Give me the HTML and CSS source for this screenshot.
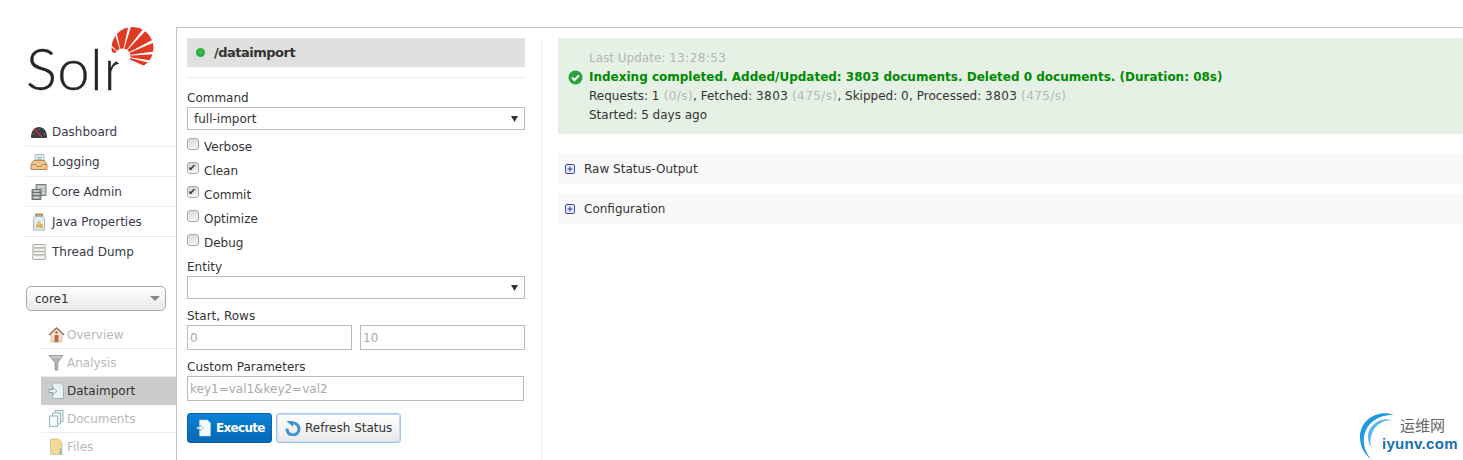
FILE: index.html
```html
<!DOCTYPE html>
<html lang="en">
<head>
<meta charset="utf-8">
<title>Solr Admin</title>
<link rel="stylesheet" href="styles.css">
</head>
<body>
<div class="page">
  <aside class="sidebar">
    <div class="logo">
      <svg width="150" height="90" viewBox="0 27 150 90">
        <defs><clipPath id="sun"><circle cx="132.500" cy="48" r="21"/></clipPath></defs>
        <text x="0" y="90" class="logo-text">Solr</text>
        <g transform="translate(-26 0)" clip-path="url(#sun)" fill="#e03a22">
          <polygon points="122,56 84.9,41 91.4,30.3"/>
          <polygon points="122,56 93.7,27.7 109.6,18"/>
          <polygon points="122,56 113,17 130.3,16.9"/>
          <polygon points="122,56 133.7,17.8 146.6,24.5"/>
          <polygon points="122,56 149.3,26.8 157.3,37.2"/>
          <polygon points="122,56 158.8,40.4 161.6,50.4"/>
          <polygon points="122,56 162,53.9 161.5,62.3"/>
          <polygon points="122,56 160.8,65.7 158.6,72.3"/>
          <circle cx="122.500" cy="56.500" r="8" fill="#fff"/>
        </g>
      </svg>
    </div>
    <ul class="nav">
      <li class="nav-item">
        <svg class="nav-icon" viewBox="0 0 18 18"><path d="M1 14C1 8 4.500 4 9 4S17 8 17 14c0 1-1 1-2 1H3c-1 0-2 0-2-1z" fill="#3c3d44"/><path d="M4 6l8 8" stroke="#d8342c" stroke-width="1.300"/><path d="M3 11h1M9 6v1M14 11h1" stroke="#9a9aa0"/></svg>
        <span>Dashboard</span>
      </li>
      <li class="nav-item">
        <svg class="nav-icon" viewBox="0 0 18 18"><path d="M5 1.500h9v9H5z" fill="#dfeaf0" stroke="#a9bcc6"/><path d="M7 4.500h5M7 6.500h5" stroke="#9fb3bd"/><path d="M3.500 7.500L1 11.500v5h16v-5l-2.500-4z" fill="#f0c690" stroke="#c08a50"/><path d="M1.500 11.500h4.500l1 2h4l1-2h4.500" fill="none" stroke="#c08a50"/></svg>
        <span>Logging</span>
      </li>
      <li class="nav-item">
        <svg class="nav-icon" viewBox="0 0 18 18"><path d="M6 1.500h10v11H6z" fill="#b9bdb8" stroke="#7d827e"/><path d="M2 6.500h9v3H2zM2 9.500h9v3H2zM2 12.500h9v4H2z" fill="#9ca3a0" stroke="#6b716e"/><path d="M7 4h8M12 7h3M12 10h3M4 8h5M4 11h5M4 14.500h5" stroke="#e4e8e4"/></svg>
        <span>Core Admin</span>
      </li>
      <li class="nav-item">
        <svg class="nav-icon" viewBox="0 0 18 18"><path d="M5.500 1h7v2.500h-7z" fill="#c9a268" stroke="#a98648"/><path d="M5 3.500h8l1.500 2.500v11h-11V6z" fill="#e2edf3" stroke="#a8b8c4"/><circle cx="7.500" cy="13" r="2" fill="#e1b75e"/><circle cx="11" cy="13" r="2" fill="#d9a94a"/><circle cx="9" cy="10" r="2" fill="#e8c470"/></svg>
        <span>Java Properties</span>
      </li>
      <li class="nav-item">
        <svg class="nav-icon" viewBox="0 0 18 18"><g fill="#f0f0ec" stroke="#a8aaa6"><rect x="2.500" y="1.500" width="13" height="3.500" rx="1.700"/><rect x="2.500" y="5" width="13" height="3.500" rx="1.700"/><rect x="2.500" y="8.500" width="13" height="3.500" rx="1.700"/><rect x="2.500" y="12" width="13" height="4.500" rx="1.700"/></g></svg>
        <span>Thread Dump</span>
      </li>
    </ul>
    <div class="core-select">
      <span>core1</span>
      <svg class="core-caret" width="10" height="5" viewBox="0 0 10 5"><path d="M0 0h10L5 5z" fill="#888"/></svg>
    </div>
    <ul class="subnav">
      <li class="sub-item">
        <svg class="sub-icon" viewBox="0 0 17 17"><path d="M.5 8.500L8.500 1l8 7.500-1 1-7-6.300-7 6.300z" fill="#8b5a3a"/><path d="M3 8l5.500-5L14 8v8H3z" fill="#f3e3cd" stroke="#b99873" stroke-width=".6"/><rect x="6.500" y="9" width="4" height="7" fill="#b9582a"/><circle cx="8.500" cy="6.500" r="1.200" fill="#b9582a"/></svg>
        <span>Overview</span>
      </li>
      <li class="sub-item">
        <svg class="sub-icon" viewBox="0 0 17 17"><path d="M1 1.500h14L9.800 8.500v7.500H7V8.500z" fill="#a9aba8" stroke="#7e807d" stroke-width=".7"/><path d="M3 3h10" stroke="#e0e0de"/></svg>
        <span>Analysis</span>
      </li>
      <li class="sub-item sub-active">
        <svg class="sub-icon" viewBox="0 0 17 17"><path d="M4.500 1h8l3 3v12.500h-11z" fill="#edf6f7" stroke="#8ba9ae" stroke-width=".8"/><path d="M1 7.500h4V5.500l3.800 3.500L5 12.500v-2H1z" fill="#f2f8f8" stroke="#6f9399" stroke-width=".8"/></svg>
        <span>Dataimport</span>
      </li>
      <li class="sub-item">
        <svg class="sub-icon" viewBox="0 0 17 17"><path d="M7 .5h8v11H7z" fill="#e5f0f0" stroke="#7f9da0" stroke-width=".8"/><path d="M4.500 3h8v11h-8z" fill="#eef6f6" stroke="#7f9da0" stroke-width=".8"/><path d="M1.500 6h8v10.500h-8z" fill="#f6fbfb" stroke="#7f9da0" stroke-width=".8"/></svg>
        <span>Documents</span>
      </li>
      <li class="sub-item">
        <svg class="sub-icon" viewBox="0 0 17 17"><path d="M2.500 1h8l3.500 3v12.500H2.500z" fill="#f2d48e" stroke="#d3ae62" stroke-width=".7"/><path d="M12.500 10.500v6" stroke="#5fa6c9" stroke-width="1.500"/></svg>
        <span>Files</span>
      </li>
    </ul>
  </aside>

  <main class="content">
    <section class="form-col">
      <h2 class="form-title"><span class="dot"></span>/dataimport</h2>
      <div class="form-rule"></div>
      <label class="field-label">Command</label>
      <div class="fake-select">
        <span>full-import</span>
        <svg width="7" height="6" viewBox="0 0 7 6"><path d="M0 0h7L3.500 6z" fill="#333"/></svg>
      </div>
      <div class="checks">
        <label class="check"><input type="checkbox"><span>Verbose</span></label>
        <label class="check"><input type="checkbox" checked><span>Clean</span></label>
        <label class="check"><input type="checkbox" checked><span>Commit</span></label>
        <label class="check"><input type="checkbox"><span>Optimize</span></label>
        <label class="check"><input type="checkbox"><span>Debug</span></label>
      </div>
      <label class="field-label label-tight">Entity</label>
      <div class="fake-select">
        <span></span>
        <svg width="7" height="6" viewBox="0 0 7 6"><path d="M0 0h7L3.500 6z" fill="#333"/></svg>
      </div>
      <label class="field-label label-gap">Start, Rows</label>
      <div class="pair">
        <input class="text-input" type="text" placeholder="0">
        <input class="text-input" type="text" placeholder="10">
      </div>
      <label class="field-label label-gap">Custom Parameters</label>
      <input class="text-input input-wide" type="text" placeholder="key1=val1&amp;key2=val2">
      <div class="buttons">
        <button class="btn btn-primary" type="button">
          <svg width="15" height="18" viewBox="1 0 15 18"><path d="M4.500 1h8l3 3v13h-11z" fill="#f4fafb" stroke="#b5d0de" stroke-width=".6"/><path d="M2 8h3V6l3.500 3L5 12v-2H2z" fill="#fff" stroke="#7ba4b8" stroke-width=".7"/></svg>
          <span>Execute</span>
        </button>
        <button class="btn btn-secondary" type="button">
          <svg width="16" height="16" viewBox="0 0 16 16"><path d="M8 3a6 6 0 1 1-6 5.500" fill="none" stroke="#3b93d4" stroke-width="3"/><path d="M1.500 1l6.500 0v6z" fill="#3b93d4"/></svg>
          <span>Refresh Status</span>
        </button>
      </div>
    </section>
    <section class="status-col">
      <div class="status">
        <div class="status-line status-muted">Last Update: <span class="num">13:28:53</span></div>
        <svg class="status-icon" width="15" height="15" viewBox="0 0 15 15"><circle cx="7.500" cy="7.500" r="7" fill="#2da13c"/><path d="M4 7.500l2.500 2.500 4.500-4.500" fill="none" stroke="#fff" stroke-width="2"/></svg>
        <div class="status-line status-head">Indexing completed. Added/Updated: 3803 documents. Deleted 0 documents. (Duration: 08s)</div>
        <div class="status-line">Requests: <span class="num">1</span> <span class="rate num">(0/s)</span>, Fetched: <span class="num">3803</span> <span class="rate num">(475/s)</span>, Skipped: <span class="num">0</span>, Processed: <span class="num">3803</span> <span class="rate num">(475/s)</span></div>
        <div class="status-line">Started: 5 days ago</div>
      </div>
      <div class="block">
        <svg width="10" height="10" viewBox="0 0 10 10"><rect x=".5" y=".5" width="9" height="9" rx="1.500" fill="#e8ecf8" stroke="#3a48a8"/><path d="M2.500 5h5M5 2.500v5" stroke="#2a3898"/></svg>
        <span>Raw Status-Output</span>
      </div>
      <div class="block">
        <svg width="10" height="10" viewBox="0 0 10 10"><rect x=".5" y=".5" width="9" height="9" rx="1.500" fill="#e8ecf8" stroke="#3a48a8"/><path d="M2.500 5h5M5 2.500v5" stroke="#2a3898"/></svg>
        <span>Configuration</span>
      </div>
    </section>
  </main>
</div>
<div class="watermark">
  <svg class="wm-arc" width="50" height="50" viewBox="0 0 50 50"><path d="M35 3C20-3 1 7 1 25c0 11 6 19 11 22C6 40 4 32 5 25 7 11 20 2 35 3z" fill="#1f9ae0"/><path d="M33 8C22 5 9 13 9 25c0 5 2 9 4 12-2-4-2-8-1-12C14 14 23 8 33 8z" fill="#5cb8e8"/></svg>
  <div class="wm-text">
    <span class="wm-cn">运维网</span>
    <span class="wm-en">iyunv.com</span>
  </div>
</div>
</body>
</html>
```

FILE: styles.css
```css
* { box-sizing: border-box; }
html, body { margin: 0; padding: 0; height: 460px; overflow: hidden; background: #fff; }
body { font-family: "DejaVu Sans", sans-serif; font-size: 12px; color: #333; }
ul { list-style: none; margin: 0; padding: 0; }

.page { display: flex; height: 460px; padding-top: 27px; }

.sidebar { width: 176px; flex: none; padding-left: 26px; }
.logo { height: 90px; }
.logo svg { display: block; }
.logo-text { font-family: "Lato", sans-serif; font-weight: 300; font-size: 58px; letter-spacing: .5px; fill: #25252b; stroke: #25252b; stroke-width: .4px; }

.nav-item { display: flex; align-items: center; height: 30px; padding-left: 4px; gap: 4px; border-bottom: 1px solid #eee; color: #3a3a4a; }
.nav-item:last-child { border-bottom: 0; }
.nav-icon { width: 18px; height: 18px; flex: none; }

.core-select { display: flex; align-items: center; justify-content: space-between; width: 140px; height: 25px; margin-top: 19px; padding: 0 5px 0 8px; border: 1px solid #aaa; border-radius: 5px; background: linear-gradient(#fff, #e8e8e8); }

.subnav { margin: 10px 0 0 15px; }
.sub-item { display: flex; align-items: center; height: 28px; padding-left: 7px; gap: 2px; border-bottom: 1px solid #eee; color: #b8b8b8; }
.sub-icon { width: 17px; height: 17px; flex: none; opacity: .9; }
.sub-active { background: #ccc; color: #333; border-bottom-color: #ccc; }

.content { flex: 1; display: flex; padding: 10px 0 0 10px; border-top: 1px solid #c4c4c4; border-left: 1px solid #c4c4c4; }

.form-col { width: 355px; flex: none; padding-right: 16px; border-right: 1px solid #eee; display: flex; flex-direction: column; align-items: stretch; }
.form-col > * { flex: none; }
.form-title { display: flex; align-items: center; height: 29px; margin: 0; padding-left: 9px; background: #e0e0e0; font-size: 13px; font-weight: bold; letter-spacing: -.5px; color: #333; }
.dot { width: 9px; height: 9px; margin-right: 9px; border-radius: 50%; background: radial-gradient(circle at 50% 40%, #3cc04c, #1f9a30); }
.form-rule { height: 1px; margin-top: 10px; background: #eee; }

.field-label { display: block; height: 19px; line-height: 21px; margin-top: 10px; }
.label-tight { margin-top: 3px; }
.label-gap { margin-top: 7px; }

.fake-select { display: flex; align-items: center; justify-content: space-between; height: 23px; padding: 0 6px; border: 1px solid #bbb; background: #fff; }

.checks { margin-top: 4px; }
.check { display: flex; align-items: center; gap: 5px; height: 24px; }
.check span { padding-top: 2px; }
.check input { appearance: none; position: relative; width: 12px; height: 12px; margin: 0 0 4px; border: 1px solid #aaa; border-radius: 3px; background: linear-gradient(#d8d8d8, #f5f5f5); }
.check input:checked::after { content: "✔"; position: absolute; left: 0; top: -1px; font-size: 10px; line-height: 12px; color: #333; }

.pair { display: flex; justify-content: space-between; }
.pair .text-input { width: 165px; }
.text-input { display: block; height: 25px; padding: 0 2px; border: 1px solid #bbb; outline: 0; font: inherit; color: #333; }
.text-input::placeholder { color: #aaa; opacity: 1; }
.input-wide { width: 337px; }

.buttons { display: flex; gap: 4px; margin-top: 12px; }
.btn { display: flex; align-items: center; height: 30px; font: inherit; border-radius: 3px; }
.btn-primary { width: 85px; padding: 0 0 0 8px; gap: 5px; border: 1px solid #0a63ad; background: linear-gradient(#0a82d8, #0567b4); color: #fff; font-weight: bold; letter-spacing: -.7px; }
.btn-secondary { width: 125px; padding: 0 0 0 8px; gap: 4px; border: 1px solid #a4c6f2; box-shadow: 0 0 0 1px #c5d9f4 inset; background: linear-gradient(#fff, #e8e8e8); color: #333; }

.status-col { flex: 1; padding-left: 16px; }
.status { display: grid; grid-template-columns: 21px 1fr; align-items: center; padding: 11px 0 9px 10px; background: #e6f1e6; }
.status-line { grid-column: 2; line-height: 19px; white-space: nowrap; }
.status-icon { grid-column: 1; grid-row: 2; }
.status-head { grid-row: 2; font-weight: bold; color: #008a00; }
.status-muted { color: #b5b5b5; }
.rate { color: #b8b8b8; }
.num { letter-spacing: .4px; }

.block { display: flex; align-items: center; gap: 9px; height: 30px; margin-top: 10px; padding-left: 7px; background: #f9f9f9; }
.status + .block { margin-top: 20px; }

.watermark { position: absolute; right: 0; bottom: 0; width: 104px; height: 48px; }
.wm-arc { position: absolute; left: 0; top: 0; }
.wm-text { position: absolute; left: 23px; top: 3px; display: flex; flex-direction: column; }
.wm-cn { margin-left: 18px; font-family: "Noto Sans CJK SC", sans-serif; font-size: 15px; line-height: 20px; color: #666; }
.wm-en { font-family: "Liberation Sans", sans-serif; font-size: 15px; line-height: 17px; font-weight: bold; color: #1470b0; letter-spacing: .3px; }
```
